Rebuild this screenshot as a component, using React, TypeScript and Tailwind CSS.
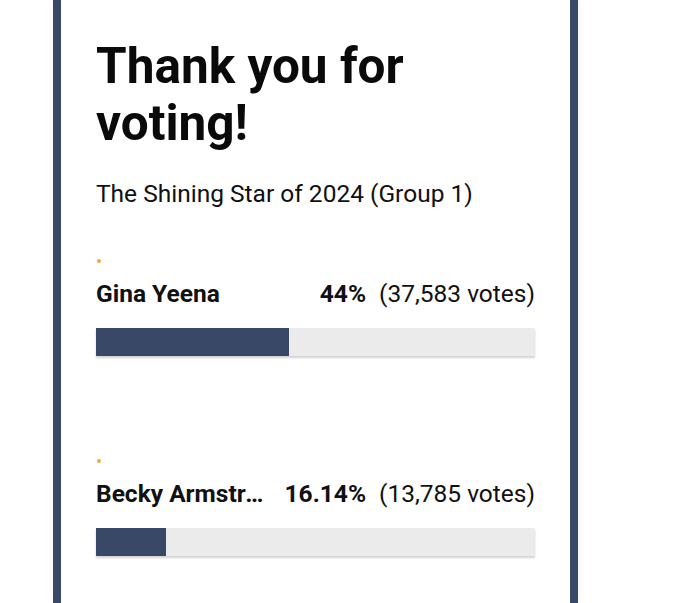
const results = [
  { name: "Gina Yeena", percent: "44%", votes: "37,583", width: 44 },
  { name: "Becky Armstrong", percent: "16.14%", votes: "13,785", width: 16 },
];

function ResultRow({
  name,
  percent,
  votes,
  width,
}: {
  name: string;
  percent: string;
  votes: string;
  width: number;
}) {
  return (
    <div className="mb-[103px]">
      <div className="ml-[1px] h-[4px] w-[4px] rounded-full bg-[#e6ad3f]"></div>
      <div className="mt-[13px] flex items-center text-[24.5px] leading-[36px] text-[#111]">
        <span className="min-w-0 flex-1 truncate font-bold">{name}</span>
        <span className="ml-[8px] shrink-0 font-bold">{percent}</span>
        <span className="ml-[13px] shrink-0">({votes} votes)</span>
      </div>
      <div className="mt-[16px] h-[28px] w-full bg-[#ebebeb] shadow-[0_2px_2px_rgba(0,0,0,0.18)]">
        <div className="h-full bg-[#3a4868]" style={{ width: `${width}%` }}></div>
      </div>
    </div>
  );
}

export default function App() {
  return (
    <div
      className="min-h-[603px] overflow-hidden bg-white pl-[53px]"
      style={{ fontFamily: "Roboto, 'Liberation Sans', sans-serif" }}
    >
      <div className="min-h-[603px] w-[525px] border-x-8 border-[#3a4868] bg-white px-[35px] pt-[37.6px] shadow-[0_0_10px_rgba(0,0,0,0.05)]">
        <h1 className="text-[49.5px] font-bold leading-[57px] text-[#0a0a0a]">
          Thank you for voting!
        </h1>
        <p className="mt-[24px] text-[24.5px] leading-[36px] text-[#111]">
          The Shining Star of 2024 (Group 1)
        </p>
        <div className="mt-[47px]">
          {results.map((r) => (
            <ResultRow key={r.name} {...r} />
          ))}
        </div>
      </div>
    </div>
  );
}
